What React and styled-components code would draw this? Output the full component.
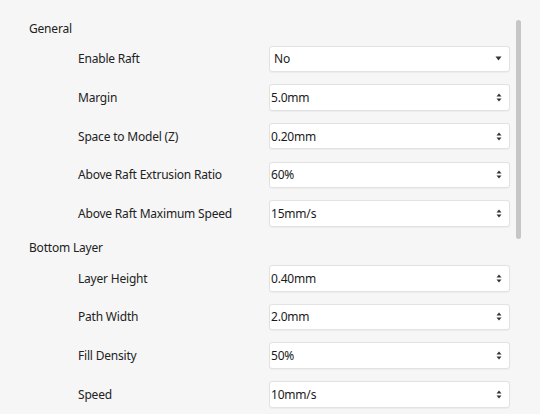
import React from "react"
import styled, { createGlobalStyle } from "styled-components"

const GlobalStyle = createGlobalStyle`
html, body {
  margin: 0;
  padding: 0;
  background: #f6f6f6;
}
body {
  font-family: "Noto Sans", "Open Sans", sans-serif;
  color: #222222;
}
`

const Page = styled.div`
position: relative;
width: 540px;
height: 414px;
overflow: hidden;
background: #f6f6f6;
padding-top: 13.5px;
box-sizing: border-box;
`

const SectionTitle = styled.div`
height: 26px;
box-sizing: border-box;
padding-top: 3px;
display: flex;
align-items: center;
padding-left: 29px;
font-size: 12px;
letter-spacing: -0.2px;
`

const Row = styled.div`
height: 38.7px;
display: grid;
grid-template-columns: 78px 191px 241px;
align-items: center;
font-size: 12px;
letter-spacing: -0.2px;
`

const Label = styled.div`
grid-column: 2;
white-space: nowrap;
`

const Field = styled.div`
grid-column: 3;
height: 26.5px;
box-sizing: border-box;
background: #ffffff;
border: 1px solid #e2e2e2;
border-radius: 3px;
box-shadow: 0 0.5px 1px rgba(0, 0, 0, 0.04);
display: flex;
align-items: center;
justify-content: space-between;
padding: 0 7px 0 ${props => (props.select ? "4px" : "1px")};
color: #1a1a1a;
`

const Arrows = styled.svg`
flex: none;
`

const Scrollbar = styled.div`
position: absolute;
left: 516px;
top: 20px;
width: 5px;
height: 219px;
border-radius: 3px;
background: #c6c6c6;
`

function DropArrow() {
    return (
        <Arrows width="7" height="5" viewBox="0 0 7 5">
            <path d="M0.5 0.5 L6.5 0.5 L3.5 4.5 Z" fill="#333" />
        </Arrows>
    )
}

function SpinArrows() {
    return (
        <Arrows width="6" height="9" viewBox="0 0 6 9">
            <path d="M0.5 3.5 L5.5 3.5 L3 0.5 Z" fill="#333" />
            <path d="M0.5 5.5 L5.5 5.5 L3 8.5 Z" fill="#333" />
        </Arrows>
    )
}

const general = [
    { label: "Enable Raft", value: "No", select: true },
    { label: "Margin", value: "5.0mm" },
    { label: "Space to Model (Z)", value: "0.20mm" },
    { label: "Above Raft Extrusion Ratio", value: "60%" },
    { label: "Above Raft Maximum Speed", value: "15mm/s" },
]

const bottom = [
    { label: "Layer Height", value: "0.40mm" },
    { label: "Path Width", value: "2.0mm" },
    { label: "Fill Density", value: "50%" },
    { label: "Speed", value: "10mm/s" },
]

function SettingRow({ item }) {
    return (
        <Row>
            <Label>{item.label}</Label>
            <Field select={item.select}>
                <span>{item.value}</span>
                {item.select ? <DropArrow /> : <SpinArrows />}
            </Field>
        </Row>
    )
}

export default function App() {
    return (
        <Page>
            <GlobalStyle />
            <SectionTitle>General</SectionTitle>
            {general.map(item => <SettingRow key={item.label} item={item} />)}
            <SectionTitle>Bottom Layer</SectionTitle>
            {bottom.map(item => <SettingRow key={item.label} item={item} />)}
            <Scrollbar />
        </Page>
    )
}
